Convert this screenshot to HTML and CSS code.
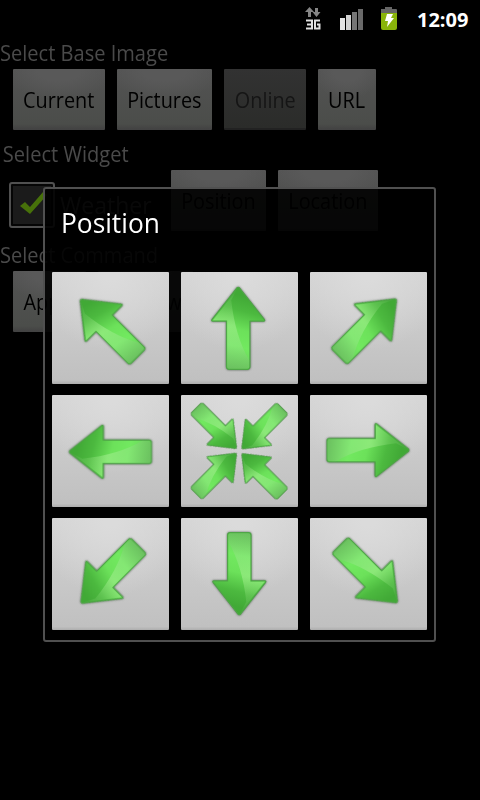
FILE: index.html
```html
<!DOCTYPE html>
<html lang="en">
<head>
<meta charset="utf-8">
<title>Position</title>
<link rel="stylesheet" href="styles.css">
</head>
<body>
<svg class="defs" width="0" height="0" aria-hidden="true">
  <defs>
    <linearGradient id="body" gradientUnits="userSpaceOnUse" x1="14" y1="-30" x2="-4" y2="42">
      <stop offset="0" stop-color="#41a936"/>
      <stop offset=".2" stop-color="#4cb93f"/>
      <stop offset=".45" stop-color="#6ce15a"/>
      <stop offset=".68" stop-color="#72e960"/>
      <stop offset="1" stop-color="#67c95a"/>
    </linearGradient>
    <linearGradient id="gloss" gradientUnits="userSpaceOnUse" x1="0" y1="-40" x2="0" y2="42">
      <stop offset="0" stop-color="#fff" stop-opacity="0"/>
      <stop offset=".2" stop-color="#b5f5a0" stop-opacity=".16"/>
      <stop offset=".45" stop-color="#b5f5a0" stop-opacity=".45"/>
      <stop offset=".7" stop-color="#a5e598" stop-opacity=".35"/>
      <stop offset="1" stop-color="#70a868" stop-opacity=".3"/>
    </linearGradient>
    <g id="arrow">
      <path class="edge" d="M-1.200-40.500Q0-41.500 1.200-40.500L26.200-8.600Q27-7.200 25.500-7.200H11.700V38.500Q11.700 41 9.200 41H-9.200Q-11.700 41-11.700 38.500V-7.200H-25.500Q-27-7.200-26.200-8.600Z"/>
      <path fill="url(#gloss)" d="M-1-39.500L-25-8H-11V38Q-11 40.300-9 40.300H9Q11 40.300 11 32Q-3 8-7-28Z"/>
    </g>
  </defs>
</svg>

<div class="screen">
  <header class="status">
    <svg class="net" width="18" height="24" viewBox="0 0 18 24">
      <path fill="#858585" d="M5.500 0 10 5H7v5H4V5H1zM12.500 10 8.500 5H11V1h3v4h2.500z"/>
      <path fill="none" stroke="#e0e0e0" stroke-width="2" d="M2 13.500H8V21.500H2M3 17.500H8M16 13.500H11V21.500H15.500V17.500H13"/>
    </svg>
    <svg class="signal" width="24" height="22" viewBox="0 0 24 22">
      <path fill="#e3e3e3" d="M0 10h5v12H0z"/>
      <path fill="#d0d0d0" d="M6 7h5v15H6z"/>
      <path fill="#757575" d="M12 4h5v18h-5z"/>
      <path fill="#696969" d="M18 1h5v21h-5z"/>
    </svg>
    <svg class="battery" width="18" height="24" viewBox="0 0 18 24">
      <path fill="#666" d="M1 2h4V0h7v2h4q1 0 1 1v3H1z"/>
      <path fill="#89b40a" d="M1 6h16v15q0 2-2 2H3q-2 0-2-2z"/>
      <path fill="#fff" d="M7 7h6l-2 4h3L7 20l1-6H5z"/>
    </svg>
    <span class="clock">12:09</span>
  </header>

  <main class="page">
    <h2>Select Base Image</h2>
    <div class="row">
      <button class="w92"><span>Current</span></button>
      <button class="w95"><span>Pictures</span></button>
      <button class="w82 off"><span>Online</span></button>
      <button class="w58"><span>URL</span></button>
    </div>
    <h2 class="indent">Select Widget</h2>
    <div class="row widget">
      <span class="check"><svg width="46" height="46" viewBox="0 0 46 46"><path fill="#47710a" d="M11 24l5-4 5 5L34 10l4 3-17 19z"/></svg></span>
      <span class="name">Weather</span>
      <button class="w95"><span>Position</span></button>
      <button class="w100"><span>Location</span></button>
    </div>
    <h2>Select Command</h2>
    <div class="row">
      <button class="w73"><span>Apply</span></button>
      <button class="w95"><span>Preview</span></button>
    </div>
  </main>

  <section class="dialog">
    <h1>Position</h1>
    <div class="grid">
      <div class="tile"><svg viewBox="0 0 117 112"><use href="#arrow" transform="translate(57.200 56.300) rotate(-45) scale(.98)"/></svg></div>
      <div class="tile"><svg viewBox="0 0 117 112"><use href="#arrow" transform="translate(57.200 56.300)"/></svg></div>
      <div class="tile"><svg viewBox="0 0 117 112"><use href="#arrow" transform="translate(57.500 55.900) rotate(45) scale(.98)"/></svg></div>
      <div class="tile"><svg viewBox="0 0 117 112"><use href="#arrow" transform="translate(58.400 56.800) rotate(-90)"/></svg></div>
      <div class="tile"><svg viewBox="0 0 117 112">
        <use href="#arrow" transform="translate(35.200 33.200) rotate(135) scale(.69)"/>
        <use href="#arrow" transform="translate(81.200 33.500) rotate(225) scale(.69)"/>
        <use href="#arrow" transform="translate(35.200 78.600) rotate(45) scale(.69)"/>
        <use href="#arrow" transform="translate(81.200 79) rotate(-45) scale(.69)"/>
      </svg></div>
      <div class="tile"><svg viewBox="0 0 117 112"><use href="#arrow" transform="translate(58 55.200) rotate(90)"/></svg></div>
      <div class="tile"><svg viewBox="0 0 117 112"><use href="#arrow" transform="translate(57.900 56.300) rotate(225) scale(.98)"/></svg></div>
      <div class="tile"><svg viewBox="0 0 117 112"><use href="#arrow" transform="translate(58.300 55.700) rotate(180)"/></svg></div>
      <div class="tile"><svg viewBox="0 0 117 112"><use href="#arrow" transform="translate(58.500 55.800) rotate(135) scale(.98)"/></svg></div>
    </div>
  </section>
</div>
</body>
</html>
```

FILE: styles.css
```css
* { box-sizing: border-box; }
body { margin: 0; background: #000; font-family: "Open Sans", "Noto Sans", sans-serif; }
.defs { position: absolute; }
.screen { position: relative; width: 480px; height: 800px; overflow: hidden; background: #000; }

.status { display: flex; align-items: center; justify-content: flex-end; height: 38px; padding-right: 9px; color: #fff; }
.net { margin-right: 18px; }
.signal { margin-right: 16px; }
.battery { margin-right: 19px; }
.clock { width: 54px; font-size: 20px; font-weight: 700; line-height: 38px; padding-top: 1px; white-space: nowrap; }

.page { padding-top: 2px; }
.page h2 { margin: 0; height: 29px; font-size: 21px; font-weight: 400; line-height: 26px; color: #4a4a4a; white-space: nowrap; transform: scaleX(.955); transform-origin: 0 0; }
.page h2.indent { padding-left: 3px; }
.row { display: flex; gap: 12px; height: 72px; padding-left: 13px; }
.row button {
  flex: none; height: 61px; margin: 0; padding: 2px 0 0; border: 0; border-radius: 1px;
  font: 400 21px/59px "Open Sans", "Noto Sans", sans-serif; color: #000; white-space: nowrap;
  background: radial-gradient(ellipse 60% 50% at 50% 0, #595959 40%, transparent 100%), linear-gradient(#535353, #4b4d4a 90%, #434343 98%);
}
.row button span { display: inline-block; transform: scaleX(.945); }
.row button.off { color: #151515; background: linear-gradient(#323232, #2b2c2a 96%, #222 97%); }
.w58 { width: 58px; }
.w73 { width: 73px; }
.w82 { width: 82px; }
.w92 { width: 92px; }
.w95 { width: 95px; }
.w100 { width: 100px; }
.widget { padding-left: 9px; }
.check { width: 46px; height: 46px; margin-top: 12px; border: 2px solid #505050; border-radius: 3px; background: #1b1b1b; box-shadow: inset 0 0 0 2px #050505; }
.check svg { display: block; margin: -2px; }
.name { width: 99px; margin: 12px 0 0 -7px; font-size: 24px; line-height: 45px; color: #585858; transform: scaleX(.96); transform-origin: 0 0; }

.dialog { position: absolute; left: 43px; top: 187px; width: 393px; height: 455px; border: 2px solid #505050; border-radius: 3px; padding: 0 7px; background: rgba(0, 0, 0, .9); }
.dialog h1 { margin: 0; height: 83px; padding-left: 9px; font-size: 27px; font-weight: 400; line-height: 67px; color: #fff; transform: scaleX(.975); transform-origin: 9px 0; }
.grid { display: grid; grid-template-columns: repeat(3, 117px); grid-auto-rows: 112px; gap: 11px 12px; }
.tile { border-radius: 1px; background: radial-gradient(ellipse 65% 70% at 50% 0, #dbdbdb 10%, transparent 100%), linear-gradient(#d4d4d4, #c0c0c0 97%, #adadad); }
.tile svg { display: block; width: 117px; height: 112px; }
.edge { fill: url(#body); stroke: #4fa547; stroke-width: 1.200; stroke-linejoin: round; filter: drop-shadow(0 0 1px rgba(40, 60, 40, .7)); }
```
